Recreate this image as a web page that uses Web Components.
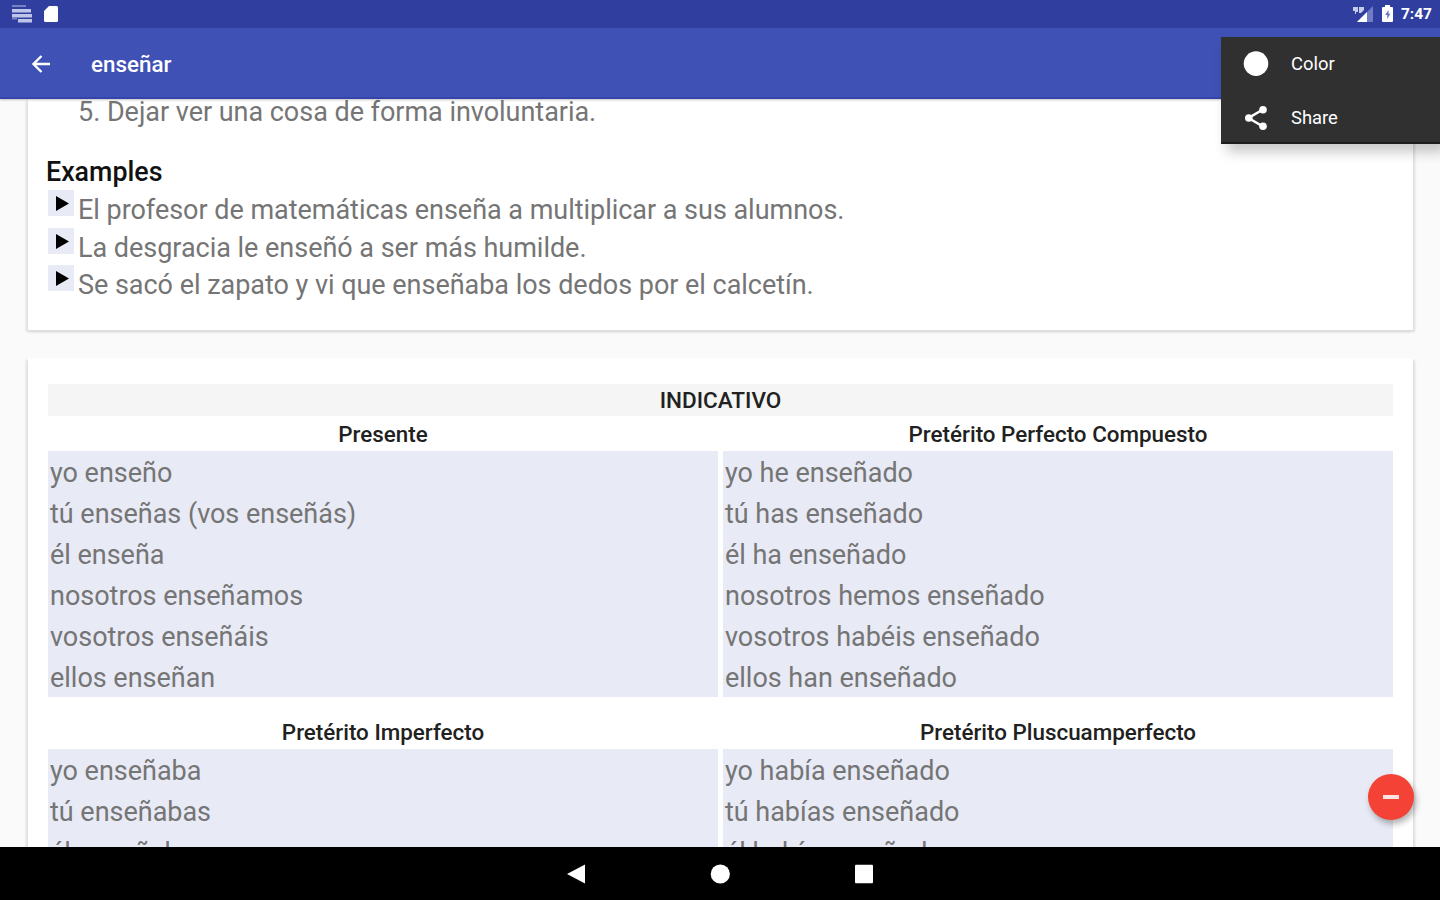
<!DOCTYPE html>
<html lang="es">
<head>
<meta charset="utf-8">
<title>enseñar</title>
<style>
  html, body {
    margin: 0;
    height: 100%;
    overflow: hidden;
  }

  body {
    font-family: Roboto, "Liberation Sans", sans-serif;
    background: #fafafa;
  }
</style>
</head>
<body>

<template id="dictionary-screen-template">
  <style>
    :host {
      display: flex;
      flex-direction: column;
      position: relative;
      height: 900px;
      overflow: hidden;
    }

    main {
      flex: 1;
      min-height: 0;
      overflow: hidden;
      padding: 0 27px 0 28px;
      display: flex;
      flex-direction: column;
      gap: 28px;
    }

    .overlay {
      position: absolute;
      z-index: 2;
    }

    .menu {
      top: 37px;
      right: 0;
    }

    .fab {
      right: 26px;
      bottom: 80px;
    }
  </style>
  <slot name="status"></slot>
  <slot name="bar"></slot>
  <main><slot></slot></main>
  <slot name="nav"></slot>
  <div class="overlay menu"><slot name="menu"></slot></div>
  <div class="overlay fab"><slot name="fab"></slot></div>
</template>

<template id="status-bar-template">
  <style>
    :host {
      display: flex;
      align-items: center;
      height: 28px;
      flex: none;
      box-sizing: border-box;
      padding: 0 8px 0 12px;
      background: #303f9f;
      color: #fff;
      font-size: 15.500px;
      font-weight: 700;
    }

    svg {
      display: block;
    }

    .card {
      margin-left: 12px;
    }

    .signal {
      margin-left: auto;
    }

    .battery {
      margin: 0 8px 0 9px;
    }
  </style>
  <svg width="20" height="20" viewBox="0 0 20 20" fill="#bfc5e8">
    <path d="M0 5h19v3.500H0zM0 10h20v3.500H0zM6 15h14v3.500H6z"/>
    <path d="M0 1h14v2H0zM0 14h5v1.500H0z" opacity=".5"/>
  </svg>
  <svg class="card" width="14" height="18" viewBox="0 0 14 18">
    <path d="M5 1h7.500q1.500 0 1.500 1.500v13q0 1.500-1.500 1.500h-11Q0 17 0 15.500V6z" fill="#fff"/>
  </svg>
  <svg class="signal" width="20" height="18" viewBox="0 0 20 18">
    <path d="M20 1v16H4z" fill="#6f7bc4"/>
    <path d="M14 7v10H4z" fill="#fff"/>
    <path d="M0 2h5v5H3v2H2V6H0zM6 2h5v3l-3 3H6z" fill="#c5cae9"/>
  </svg>
  <svg class="battery" width="11" height="18" viewBox="0 0 11 18">
    <path d="M3 0h5v2h2q1 0 1 1v13q0 1-1 1H1q-1 0-1-1V3q0-1 1-1h2z" fill="#fff"/>
    <path d="M6.500 5 3.200 10h2.100v4l3-5.200H6.500z" fill="#6773bd"/>
  </svg>
  <span><slot></slot></span>
</template>

<template id="app-bar-template">
  <style>
    :host {
      display: flex;
      align-items: center;
      flex: none;
      height: 71px;
      box-sizing: border-box;
      padding: 3px 0 0 31px;
      background: #3f51b5;
      border-bottom: 2px solid #3345ad;
      color: #fff;
      position: relative;
      z-index: 1;
      box-shadow: 0 1px 2px rgba(0, 0, 0, 0.25);
    }

    svg {
      display: block;
      margin-right: 40px;
    }

    h1 {
      margin: 0;
      font-size: 22.400px;
      font-weight: 500;
    }
  </style>
  <svg width="20" height="20" viewBox="0 0 20 20" fill="none" stroke="#fff" stroke-width="2.400">
    <path d="M19 10H2.500M10.500 2 2.500 10l8 8"/>
  </svg>
  <h1><slot></slot></h1>
</template>

<template id="overflow-menu-template">
  <style>
    :host {
      display: flex;
      flex-direction: column;
      box-sizing: border-box;
      width: 219px;
      height: 107px;
      background: #303030;
      border-bottom: 2px solid #1e1e1e;
      box-shadow: 6px 8px 12px rgba(0, 0, 0, 0.22);
    }
  </style>
  <slot></slot>
</template>

<template id="menu-entry-template">
  <style>
    :host {
      display: flex;
      align-items: center;
      height: 54px;
      flex: none;
      padding-left: 22px;
      color: #fff;
      font-size: 18.400px;
    }

    .icon {
      display: flex;
      justify-content: center;
      width: 26px;
      margin-right: 22px;
    }

    .label {
      padding-bottom: 2px;
    }
  </style>
  <span class="icon"><slot name="icon"></slot></span>
  <span class="label"><slot></slot></span>
</template>

<template id="paper-card-template">
  <style>
    :host {
      display: block;
      flex: none;
      background: #fff;
      box-shadow: -2px 2px 2px #dedede, 2px 2px 2px #dedede;
    }
  </style>
  <slot></slot>
</template>

<template id="definition-block-template">
  <style>
    :host {
      display: block;
      height: 236px;
      margin-top: -5px;
      padding-left: 18px;
      color: #757575;
      font-size: 27px;
      line-height: 37.600px;
      letter-spacing: -0.030px;
      white-space: nowrap;
    }

    .meaning {
      padding-left: 32px;
    }

    h2 {
      margin: 22px 0 0;
      color: #111;
      font-size: 26.800px;
      font-weight: 500;
      letter-spacing: 0;
    }
  </style>
  <div class="meaning"><slot name="meaning"></slot></div>
  <h2><slot name="heading"></slot></h2>
  <slot></slot>
</template>

<template id="spoken-example-template">
  <style>
    :host {
      display: flex;
      align-items: flex-start;
      height: 37.600px;
      padding-left: 2px;
    }

    .play {
      display: flex;
      flex: none;
      width: 26px;
      height: 26px;
      margin: -1px 4px 0 0;
      background: #e8eaf6;
    }

    .sentence {
      padding-top: 1px;
    }

    svg {
      margin: 6px 0 0 8px;
    }
  </style>
  <span class="play">
    <svg width="14" height="16" viewBox="0 0 14 16"><path d="M0 0 13 7.500 0 15z"/></svg>
  </span>
  <span class="sentence"><slot></slot></span>
</template>

<template id="mood-table-template">
  <style>
    :host {
      display: block;
      padding: 26px 20px 0;
    }

    h2 {
      height: 32px;
      margin: 0;
      background: #f5f5f5;
      color: #212121;
      font-size: 22.500px;
      font-weight: 500;
      line-height: 33px;
      text-align: center;
    }

    .tenses {
      display: grid;
      grid-template-columns: 1fr 1fr;
      column-gap: 5px;
      row-gap: 17px;
    }
  </style>
  <h2><slot name="mood"></slot></h2>
  <div class="tenses"><slot></slot></div>
</template>

<template id="verb-tense-template">
  <style>
    :host {
      display: block;
    }

    h3 {
      height: 35px;
      margin: 0;
      color: #212121;
      font-size: 22.400px;
      font-weight: 500;
      line-height: 37px;
      text-align: center;
    }

    .forms {
      height: 246px;
      padding-left: 2px;
      background: #e8eaf6;
      color: #757575;
      font-size: 27px;
      line-height: 41px;
      letter-spacing: -0.020px;
      white-space: pre-line;
      padding-top: 2px;
      box-sizing: border-box;
    }
  </style>
  <h3></h3>
  <div class="forms"><slot></slot></div>
</template>

<template id="round-button-template">
  <style>
    :host {
      display: flex;
      align-items: center;
      justify-content: center;
      width: 46px;
      height: 46px;
      border-radius: 50%;
      background: #f44336;
      box-shadow: 2px 4px 6px rgba(0, 0, 0, 0.3);
    }

    span {
      width: 16px;
      height: 4px;
      background: #fde3e1;
    }
  </style>
  <span></span>
</template>

<template id="nav-bar-template">
  <style>
    :host {
      display: flex;
      align-items: center;
      justify-content: center;
      gap: 124px;
      flex: none;
      height: 53px;
      background: #000;
      position: relative;
      z-index: 1;
    }

    svg {
      display: block;
    }
  </style>
  <svg width="20" height="20" viewBox="0 0 20 20" fill="#fff"><path d="M19 .5v19L1 10z"/></svg>
  <svg width="20" height="20" viewBox="0 0 20 20" fill="#fff"><circle cx="10.300" cy="10" r="9.600"/></svg>
  <svg width="20" height="20" viewBox="0 0 20 20" fill="#fff"><rect x="1" y=".7" width="18" height="18.600" rx="1"/></svg>
</template>

<dictionary-screen>
  <status-bar slot="status">7:47</status-bar>
  <app-bar slot="bar">enseñar</app-bar>

  <paper-card>
    <definition-block>
      <span slot="meaning">5. Dejar ver una cosa de forma involuntaria.</span>
      <span slot="heading">Examples</span>
      <spoken-example>El profesor de matemáticas enseña a multiplicar a sus alumnos.</spoken-example>
      <spoken-example>La desgracia le enseñó a ser más humilde.</spoken-example>
      <spoken-example>Se sacó el zapato y vi que enseñaba los dedos por el calcetín.</spoken-example>
    </definition-block>
  </paper-card>

  <paper-card>
    <mood-table>
      <span slot="mood">INDICATIVO</span>
      <verb-tense name="Presente">yo enseño
tú enseñas (vos enseñás)
él enseña
nosotros enseñamos
vosotros enseñáis
ellos enseñan</verb-tense>
      <verb-tense name="Pretérito Perfecto Compuesto">yo he enseñado
tú has enseñado
él ha enseñado
nosotros hemos enseñado
vosotros habéis enseñado
ellos han enseñado</verb-tense>
      <verb-tense name="Pretérito Imperfecto">yo enseñaba
tú enseñabas
él enseñaba</verb-tense>
      <verb-tense name="Pretérito Pluscuamperfecto">yo había enseñado
tú habías enseñado
él había enseñado</verb-tense>
    </mood-table>
  </paper-card>

  <overflow-menu slot="menu">
    <menu-entry>
      <svg slot="icon" width="26" height="26" viewBox="0 0 26 26"><circle cx="13" cy="12.600" r="12.300" fill="#fff"/></svg>
      Color
    </menu-entry>
    <menu-entry>
      <svg slot="icon" width="24" height="26" viewBox="0 0 24 26" fill="#fff">
        <path d="M19 4.500 4.500 13 19 21.500" fill="none" stroke="#fff" stroke-width="2.600"/>
        <circle cx="19" cy="4.800" r="3.800"/>
        <circle cx="4.800" cy="13" r="3.800"/>
        <circle cx="19" cy="21.200" r="3.800"/>
      </svg>
      Share
    </menu-entry>
  </overflow-menu>

  <round-button slot="fab"></round-button>
  <nav-bar slot="nav"></nav-bar>
</dictionary-screen>

<script>
  (function () {
    class TemplateElement extends HTMLElement {
      connectedCallback() {
        if (this.shadowRoot) return;
        const template = document.querySelector(`#${this.localName}-template`);
        this.attachShadow({ mode: "open" }).appendChild(
          template.content.cloneNode(true)
        );
      }
    }

    customElements.define("dictionary-screen", class extends TemplateElement {});
    customElements.define("status-bar", class extends TemplateElement {});
    customElements.define("app-bar", class extends TemplateElement {});
    customElements.define("overflow-menu", class extends TemplateElement {});
    customElements.define("menu-entry", class extends TemplateElement {});
    customElements.define("paper-card", class extends TemplateElement {});
    customElements.define("definition-block", class extends TemplateElement {});
    customElements.define("spoken-example", class extends TemplateElement {});
    customElements.define("mood-table", class extends TemplateElement {});
    customElements.define("round-button", class extends TemplateElement {});
    customElements.define("nav-bar", class extends TemplateElement {});

    customElements.define(
      "verb-tense",
      class extends TemplateElement {
        connectedCallback() {
          super.connectedCallback();
          this.shadowRoot.querySelector("h3").textContent =
            this.getAttribute("name");
        }
      }
    );
  })();
</script>
</body>
</html>
